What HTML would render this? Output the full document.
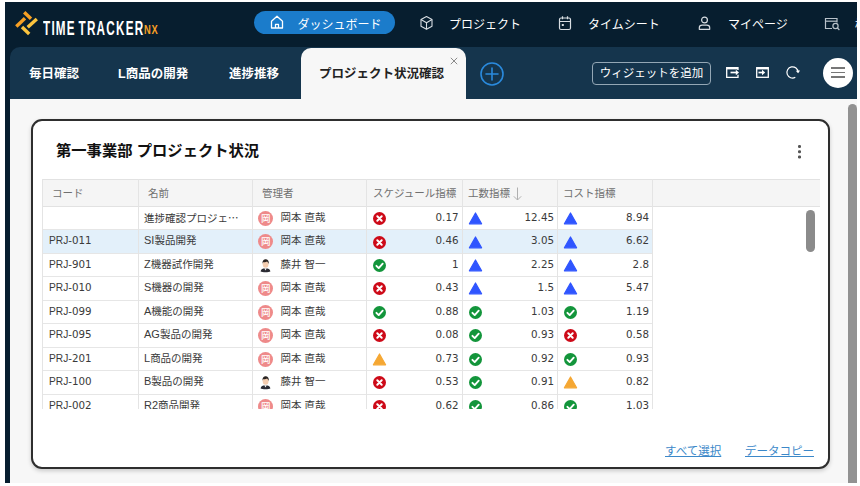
<!DOCTYPE html>
<html lang="ja">
<head>
<meta charset="utf-8">
<title>TimeTracker NX</title>
<style>
html,body{margin:0;padding:0;}
body{width:860px;height:486px;overflow:hidden;background:#fff;position:relative;
  font-family:"Liberation Sans","Noto Sans CJK JP",sans-serif;color:#222;}
*{box-sizing:border-box;}
.abs{position:absolute;}
#app{position:absolute;left:5px;top:2px;width:852px;height:481px;background:#071e2f;overflow:hidden;}
/* coordinates inside #app are target coords minus (5,2) */
#tabbar{position:absolute;left:5px;top:44.500px;width:847px;height:52.500px;background:#15354d;border-top-left-radius:10px;}
#content{position:absolute;left:5px;top:97px;width:847px;height:384px;background:#f7f7f7;}
.nav{position:absolute;top:0;height:45px;line-height:46px;color:#fff;font-size:12px;white-space:nowrap;}
.tab{position:absolute;top:46px;height:52px;line-height:52px;color:#fff;font-weight:bold;font-size:12.5px;white-space:nowrap;}
#pill{position:absolute;left:249px;top:9px;width:141px;height:23px;border-radius:12px;background:#1b7ccb;}
#acttab{position:absolute;left:296px;top:45.500px;width:165px;height:51.500px;background:#f7f7f7;border-radius:10px 10px 0 0;}
#card{position:absolute;left:26px;top:117px;width:799px;height:350px;background:#fff;border:2px solid #2e2e2e;border-radius:11px;box-shadow:0 2px 4px rgba(0,0,0,.18);}
#title{position:absolute;left:51px;top:138px;font-size:15.3px;font-weight:bold;color:#111;white-space:nowrap;line-height:22px;}
#grid{position:absolute;left:37px;top:177px;width:778px;height:230px;overflow:hidden;}
#ghead{position:absolute;left:0;top:0;width:778px;height:28px;background:#f5f5f5;border-top:1px solid #e2e2e2;border-bottom:1px solid #e2e2e2;}
.hc{position:absolute;top:1px;height:27px;line-height:27px;font-size:10.5px;color:#707070;white-space:nowrap;}
.vl{position:absolute;top:0;width:1px;height:231px;background:#e4e4e4;}
.row{position:absolute;left:0;width:610px;height:23.45px;border-bottom:1px solid #e6e6e6;font-size:10.5px;line-height:21px;color:#3a3a3a;}
.la{font-size:11px;}
.num,.num2{font-family:"DejaVu Sans","Liberation Sans",sans-serif;font-size:10.3px;}
.lb{font-size:10.2px;}
.row.sel{background:#e3f0fa;}
.c{position:absolute;top:0;white-space:nowrap;}
.num{position:absolute;top:0;text-align:right;white-space:nowrap;}
.av{position:absolute;top:4px;left:216.200px;width:15px;height:15px;border-radius:50%;background:#ee8a8a;color:#fff;font-weight:500;font-size:9.5px;line-height:15px;text-align:center;}
.ic{position:absolute;top:4.1px;width:15px;height:15px;}
.link{position:absolute;font-size:11.5px;color:#3b88c9;text-decoration:underline;white-space:nowrap;line-height:16px;}
</style>
</head>
<body>
<svg width="0" height="0" style="position:absolute">
 <defs>
  <symbol id="ng" viewBox="0 0 15 15"><circle cx="7.5" cy="7.5" r="6.500" fill="#cd0a18"/><path d="M5.300 5.300l4.400 4.400M9.700 5.300l-4.400 4.400" stroke="#fff" stroke-width="2" stroke-linecap="round"/></symbol>
  <symbol id="ok" viewBox="0 0 15 15"><circle cx="7.5" cy="7.5" r="6.500" fill="#13953b"/><path d="M4.400 7.800l2.300 2.300l4-4.400" stroke="#fff" stroke-width="1.900" fill="none" stroke-linecap="round" stroke-linejoin="round"/></symbol>
  <symbol id="up" viewBox="0 0 15 15"><path d="M7.500 2L13.600 12.800H1.400Z" fill="#2f55ff" stroke="#2f55ff" stroke-width="1.2" stroke-linejoin="round"/></symbol>
  <symbol id="wa" viewBox="0 0 15 15"><path d="M7.500 2L13.600 12.800H1.400Z" fill="#f5a733" stroke="#f5a733" stroke-width="1.2" stroke-linejoin="round"/></symbol>
  <symbol id="man" viewBox="0 0 15 15"><path d="M2.600 13.600c.3-2.300 2-3.300 4.900-3.300s4.600 1 4.900 3.300c-1.500 1-8.300 1-9.800 0z" fill="#2b2b33"/><path d="M6.300 10.200l1.200 2.400l1.200-2.400z" fill="#fff"/><ellipse cx="7.600" cy="6.300" rx="2.900" ry="3.500" fill="#f4cdb0"/><path d="M4.500 6c-.4-3.900 2-4.900 3.600-4.700c2 .2 3 2 2.600 4.700c-.5-1.400-1-2.200-1.700-2.600c-1.200.8-3.300.8-4 .9c-.3.400-.4 1-.5 1.700z" fill="#2a2422"/></symbol>
 </defs>
</svg>

<div id="app">
  <!-- logo -->
  <svg class="abs" style="left:0;top:0" width="45" height="45" viewBox="0 0 45 45">
    <g stroke-width="3.4" stroke-linecap="butt">
      <line x1="19.200" y1="10.200" x2="26" y2="16.700" stroke="#f7a024"/>
      <line x1="11.300" y1="24.500" x2="20" y2="16.300" stroke="#f7a024"/>
      <line x1="22.700" y1="25.300" x2="31.800" y2="17" stroke="#fcc43e"/>
      <line x1="17" y1="25" x2="24.200" y2="31.900" stroke="#fcc43e"/>
    </g>
  </svg>
  <div class="abs" id="logotxt" style="left:37.500px;top:14px;height:24px;line-height:24px;color:#fff;font-size:19.5px;font-weight:bold;letter-spacing:2.05px;word-spacing:-3px;white-space:nowrap;transform:scaleX(.6);transform-origin:left center;">TIME TRACKER</div>
  <div class="abs" id="nx" style="left:138.600px;top:20px;height:16px;line-height:16px;color:#f7a024;font-size:12.3px;font-weight:bold;letter-spacing:1px;white-space:nowrap;transform:scaleX(.76);transform-origin:left center;">NX</div>

  <!-- nav -->
  <div id="pill"></div>
  <svg class="abs" style="left:264px;top:12px" width="16" height="16" viewBox="0 0 16 16" fill="none" stroke="#fff" stroke-width="1.300" stroke-linejoin="round"><path d="M2.500 7.200L8 2.300l5.500 4.900V14h-11z"/><path d="M6.500 14v-3.600h3V14"/></svg>
  <div class="nav" style="left:292.500px">ダッシュボード</div>
  <svg class="abs" style="left:414px;top:13px" width="15" height="16" viewBox="0 0 15 16" fill="none" stroke="#d8dde2" stroke-width="1.100" stroke-linejoin="round"><path d="M7.500 1.500l5.500 3.100v6.600l-5.500 3.100L2 11.200V4.600z"/><path d="M2 4.600l5.500 3.100l5.500-3.100M7.500 7.700v6.600"/></svg>
  <div class="nav" style="left:444px">プロジェクト</div>
  <svg class="abs" style="left:553px;top:13px" width="14" height="16" viewBox="0 0 14 16" fill="none" stroke="#d8dde2" stroke-width="1.200" stroke-linejoin="round"><rect x="1.500" y="3" width="11" height="11.500" rx="1.500"/><path d="M1.500 6.500h11M4.500 1.200v3M9.500 1.200v3"/><rect x="3.800" y="9" width="2" height="2" fill="#d8dde2" stroke="none"/></svg>
  <div class="nav" style="left:583px">タイムシート</div>
  <svg class="abs" style="left:692px;top:13px" width="15" height="16" viewBox="0 0 15 16" fill="none" stroke="#d8dde2" stroke-width="1.200"><circle cx="7.500" cy="5" r="2.900"/><path d="M2.300 14.300v-1.500c0-1.600 1.300-2.600 2.900-2.600h4.600c1.600 0 2.900 1 2.900 2.600v1.500z" stroke-linejoin="round"/></svg>
  <div class="nav" style="left:723px">マイページ</div>
  <svg class="abs" style="left:819px;top:14.500px" width="17" height="14" viewBox="0 0 17 14" fill="none" stroke="#b9c2ca" stroke-width="1.200"><path d="M8 11.500H1.500v-10h11.500v4"/><path d="M1.500 4.200h11.500"/><circle cx="11.500" cy="9" r="2.600"/><path d="M13.400 11l2 2"/></svg>
  <div class="nav" style="left:850px">検索</div>

  <!-- tab bar -->
  <div id="tabbar"></div>
  <div id="acttab"></div>
  <div class="tab" style="left:24px">毎日確認</div>
  <div class="tab" style="left:113px">L商品の開発</div>
  <div class="tab" style="left:224px">進捗推移</div>
  <div class="tab" style="left:314px;color:#222">プロジェクト状況確認</div>
  <svg class="abs" style="left:444px;top:54px" width="10" height="10" viewBox="0 0 10 10" stroke="#8a8a8a" stroke-width="1"><path d="M1.800 1.800l6.400 6.400M8.200 1.800l-6.400 6.400"/></svg>
  <svg class="abs" style="left:474px;top:59px" width="26" height="26" viewBox="0 0 26 26" fill="none" stroke="#2a8add" stroke-width="1.600"><circle cx="13" cy="13" r="11"/><path d="M13 7v12M7 13h12" stroke-linecap="round"/></svg>
  <div class="abs" style="left:587px;top:60px;width:119px;height:22.500px;border:1px solid #94a7b5;border-radius:4px;color:#fff;font-size:11.5px;line-height:21px;text-align:center;white-space:nowrap;">ウィジェットを追加</div>
  <svg class="abs" style="left:720px;top:63px" width="16" height="14" viewBox="0 0 16 14" fill="none" stroke="#fff" stroke-width="1.300"><path d="M13 5V2.700H1.700v9.600H13V9.800"/><path d="M1.700 3.300h11.300" stroke-width="2.200"/><path d="M5.500 7.500h6.500" stroke-width="1.700"/><path d="M10.800 4.700L14 7.500L10.800 10.300z" fill="#fff" stroke="none"/></svg>
  <svg class="abs" style="left:749px;top:63px" width="16" height="14" viewBox="0 0 16 14" fill="none" stroke="#fff" stroke-width="1.300"><rect x="2.700" y="2.700" width="11.600" height="9.600"/><path d="M2.700 3.300h11.600" stroke-width="2.200"/><path d="M4.500 7.500h4.500" stroke-width="1.700"/><path d="M8 4.700L11.200 7.500L8 10.300z" fill="#fff" stroke="none"/></svg>
  <svg class="abs" style="left:779px;top:62px" width="17" height="17" viewBox="0 0 17 17" fill="none" stroke="#fff" stroke-width="1.200"><path d="M11.300 13.300a5.600 5.600 0 1 1 2.800-5"/><path d="M11.800 6.800l2.300 2.400l2-2.600z" fill="#fff" stroke="none"/></svg>
  <div class="abs" style="left:818px;top:55.500px;width:30px;height:30px;border-radius:50%;background:#fff;"></div>
  <div class="abs" style="left:826px;top:65px;width:14px;height:1.600px;background:#777"></div>
  <div class="abs" style="left:826px;top:69.500px;width:14px;height:1.600px;background:#777"></div>
  <div class="abs" style="left:826px;top:74px;width:14px;height:1.600px;background:#777"></div>

  <!-- content -->
  <div id="content"></div>
  <div class="abs" style="left:843px;top:102px;width:9px;height:400px;border-radius:5px;background:#929292;"></div>
  <div id="card"></div>
  <div id="title">第一事業部 プロジェクト状況</div>
  <div class="abs" style="left:793.300px;top:143.200px;width:2.400px;height:2.400px;border-radius:50%;background:#555;box-shadow:0 5.200px 0 #555,0 10.400px 0 #555;"></div>

  <div id="grid">
    <div id="ghead"></div>
    <div class="hc" style="left:10px">コード</div>
    <div class="hc" style="left:106px">名前</div>
    <div class="hc" style="left:220px">管理者</div>
    <div class="hc" style="left:331px">スケジュール指標</div>
    <div class="hc" style="left:426px">工数指標</div>
    <svg class="abs" style="left:470px;top:7.500px" width="11" height="14" viewBox="0 0 11 14" fill="none" stroke="#b0b0b0" stroke-width="1"><path d="M5.500 .5v12.500M1.800 9.300l3.700 3.700l3.700-3.700"/></svg>
    <div class="hc" style="left:521px">コスト指標</div>

    <div class="row" style="top:28px"><span class="c" style="left:102px">進捗確認プロジェ<span style="font-family:'Noto Sans CJK JP',sans-serif">…</span></span><span class="av">岡</span><span class="c" style="left:238.500px">岡本 直哉</span><svg class="ic" style="left:330.200px"><use href="#ng"/></svg><span class="num" style="left:340px;width:76.500px">0.17</span><svg class="ic" style="left:425.500px"><use href="#up"/></svg><span class="num" style="left:440px;width:72px">12.45</span><svg class="ic" style="left:521px"><use href="#up"/></svg><span class="num" style="left:540px;width:67px">8.94</span></div>
    <div class="row sel" style="top:51.45px"><span class="c" style="left:7px"><span class="lb">PRJ</span><span class="num2">-011</span></span><span class="c" style="left:102px"><span class="la">SI</span>製品開発</span><span class="av">岡</span><span class="c" style="left:238.500px">岡本 直哉</span><svg class="ic" style="left:330.200px"><use href="#ng"/></svg><span class="num" style="left:340px;width:76.500px">0.46</span><svg class="ic" style="left:425.500px"><use href="#up"/></svg><span class="num" style="left:440px;width:72px">3.05</span><svg class="ic" style="left:521px"><use href="#up"/></svg><span class="num" style="left:540px;width:67px">6.62</span></div>
    <div class="row" style="top:74.9px"><span class="c" style="left:7px"><span class="lb">PRJ</span><span class="num2">-901</span></span><span class="c" style="left:102px"><span class="la">Z</span>機器試作開発</span><svg class="ic" style="left:216.200px;top:4px;width:15px;height:15px"><use href="#man"/></svg><span class="c" style="left:238.500px">藤井 智一</span><svg class="ic" style="left:330.200px"><use href="#ok"/></svg><span class="num" style="left:340px;width:76.500px">1</span><svg class="ic" style="left:425.500px"><use href="#up"/></svg><span class="num" style="left:440px;width:72px">2.25</span><svg class="ic" style="left:521px"><use href="#up"/></svg><span class="num" style="left:540px;width:67px">2.8</span></div>
    <div class="row" style="top:98.35px"><span class="c" style="left:7px"><span class="lb">PRJ</span><span class="num2">-010</span></span><span class="c" style="left:102px"><span class="la">S</span>機器の開発</span><span class="av">岡</span><span class="c" style="left:238.500px">岡本 直哉</span><svg class="ic" style="left:330.200px"><use href="#ng"/></svg><span class="num" style="left:340px;width:76.500px">0.43</span><svg class="ic" style="left:425.500px"><use href="#up"/></svg><span class="num" style="left:440px;width:72px">1.5</span><svg class="ic" style="left:521px"><use href="#up"/></svg><span class="num" style="left:540px;width:67px">5.47</span></div>
    <div class="row" style="top:121.8px"><span class="c" style="left:7px"><span class="lb">PRJ</span><span class="num2">-099</span></span><span class="c" style="left:102px"><span class="la">A</span>機能の開発</span><span class="av">岡</span><span class="c" style="left:238.500px">岡本 直哉</span><svg class="ic" style="left:330.200px"><use href="#ok"/></svg><span class="num" style="left:340px;width:76.500px">0.88</span><svg class="ic" style="left:425.500px"><use href="#ok"/></svg><span class="num" style="left:440px;width:72px">1.03</span><svg class="ic" style="left:521px"><use href="#ok"/></svg><span class="num" style="left:540px;width:67px">1.19</span></div>
    <div class="row" style="top:145.25px"><span class="c" style="left:7px"><span class="lb">PRJ</span><span class="num2">-095</span></span><span class="c" style="left:102px"><span class="la">AG</span>製品の開発</span><span class="av">岡</span><span class="c" style="left:238.500px">岡本 直哉</span><svg class="ic" style="left:330.200px"><use href="#ng"/></svg><span class="num" style="left:340px;width:76.500px">0.08</span><svg class="ic" style="left:425.500px"><use href="#ok"/></svg><span class="num" style="left:440px;width:72px">0.93</span><svg class="ic" style="left:521px"><use href="#ng"/></svg><span class="num" style="left:540px;width:67px">0.58</span></div>
    <div class="row" style="top:168.7px"><span class="c" style="left:7px"><span class="lb">PRJ</span><span class="num2">-201</span></span><span class="c" style="left:102px"><span class="la">L</span>商品の開発</span><span class="av">岡</span><span class="c" style="left:238.500px">岡本 直哉</span><svg class="ic" style="left:330.200px"><use href="#wa"/></svg><span class="num" style="left:340px;width:76.500px">0.73</span><svg class="ic" style="left:425.500px"><use href="#ok"/></svg><span class="num" style="left:440px;width:72px">0.92</span><svg class="ic" style="left:521px"><use href="#ok"/></svg><span class="num" style="left:540px;width:67px">0.93</span></div>
    <div class="row" style="top:192.15px"><span class="c" style="left:7px"><span class="lb">PRJ</span><span class="num2">-100</span></span><span class="c" style="left:102px"><span class="la">B</span>製品の開発</span><svg class="ic" style="left:216.200px;top:4px;width:15px;height:15px"><use href="#man"/></svg><span class="c" style="left:238.500px">藤井 智一</span><svg class="ic" style="left:330.200px"><use href="#ng"/></svg><span class="num" style="left:340px;width:76.500px">0.53</span><svg class="ic" style="left:425.500px"><use href="#ok"/></svg><span class="num" style="left:440px;width:72px">0.91</span><svg class="ic" style="left:521px"><use href="#wa"/></svg><span class="num" style="left:540px;width:67px">0.82</span></div>
    <div class="row" style="top:215.6px"><span class="c" style="left:7px"><span class="lb">PRJ</span><span class="num2">-002</span></span><span class="c" style="left:102px"><span class="la">R2</span>商品開発</span><span class="av">岡</span><span class="c" style="left:238.500px">岡本 直哉</span><svg class="ic" style="left:330.200px"><use href="#ng"/></svg><span class="num" style="left:340px;width:76.500px">0.62</span><svg class="ic" style="left:425.500px"><use href="#ok"/></svg><span class="num" style="left:440px;width:72px">0.86</span><svg class="ic" style="left:521px"><use href="#ok"/></svg><span class="num" style="left:540px;width:67px">1.03</span></div>

    <div class="vl" style="left:0"></div>
    <div class="vl" style="left:96px"></div>
    <div class="vl" style="left:210px"></div>
    <div class="vl" style="left:324px"></div>
    <div class="vl" style="left:420px"></div>
    <div class="vl" style="left:515px"></div>
    <div class="vl" style="left:610px"></div>
  </div>
  <div class="abs" style="left:801px;top:208px;width:9px;height:42px;border-radius:5px;background:#8b8b8b;"></div>

  <div class="link" style="left:660px;top:441px">すべて選択</div>
  <div class="link" style="left:740px;top:441px">データコピー</div>
</div>
</body>
</html>
